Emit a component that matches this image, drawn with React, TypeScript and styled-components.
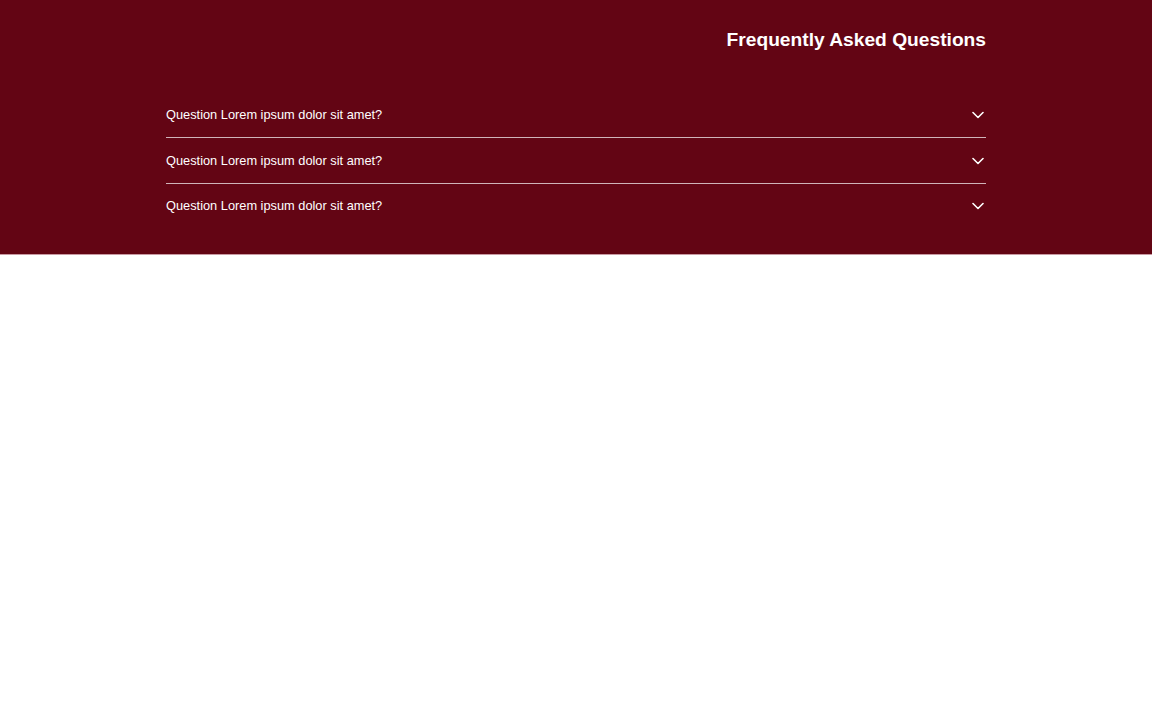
import styled, { createGlobalStyle } from "styled-components";

const GlobalStyle = createGlobalStyle`
  body {
    margin: 0;
    background: #ffffff;
    font-family: "Liberation Sans", Arial, sans-serif;
  }
`;

const FaqSection = styled.section`
  background-color: #630514;
  padding: 29px 0 25px;
  border-bottom: 1px solid #c99aa3;
`;

const Inner = styled.div`
  max-width: 820px;
  margin: 0 auto;
`;

const Title = styled.h2`
  margin: 0;
  text-align: right;
  color: #ffffff;
  font-size: 1.2rem;
  line-height: 22px;
  font-weight: 700;
`;

const QuestionList = styled.ul`
  list-style: none;
  margin: 41px 0 0;
  padding: 0;
`;

const QuestionItem = styled.li`
  height: 45px;
  display: flex;
  align-items: center;
  justify-content: space-between;
  color: #ffffff;
  font-size: 0.8rem;
  border-bottom: 1px solid rgba(255, 255, 255, 0.7);
  &:last-child {
    height: 43px;
    padding-bottom: 2px;
    border-bottom: none;
  }
`;

const Chevron = styled.svg`
  width: 12px;
  height: 8px;
  margin-right: 2px;
`;

const questions = [
  "Question Lorem ipsum dolor sit amet?",
  "Question Lorem ipsum dolor sit amet?",
  "Question Lorem ipsum dolor sit amet?",
];

const App = () => {
  return (
    <>
      <GlobalStyle />
      <FaqSection>
        <Inner>
          <Title>Frequently Asked Questions</Title>
          <QuestionList>
            {questions.map((q, i) => (
              <QuestionItem key={i}>
                <span>{q}</span>
                <Chevron viewBox="0 0 12 8" fill="none">
                  <path
                    d="M1 1.5L6 6.5L11 1.5"
                    stroke="#ffffff"
                    strokeWidth="1.6"
                    strokeLinecap="round"
                    strokeLinejoin="round"
                  />
                </Chevron>
              </QuestionItem>
            ))}
          </QuestionList>
        </Inner>
      </FaqSection>
    </>
  );
};

export default App;
